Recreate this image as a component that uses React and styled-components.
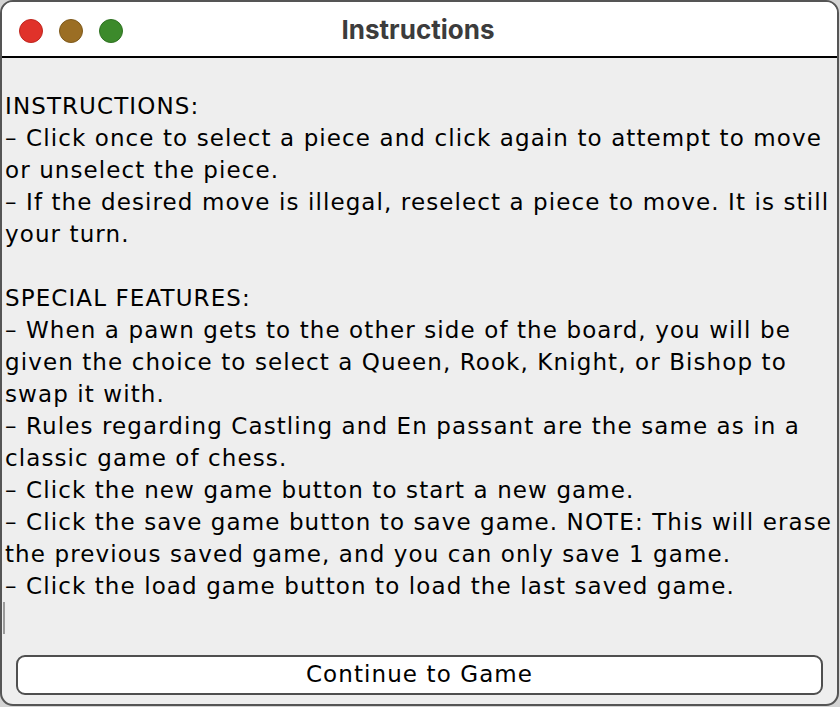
import React from "react";
import styled, { createGlobalStyle } from "styled-components";

const Global = createGlobalStyle`
  html, body { margin: 0; padding: 0; background: #d4d4d4; }
  body { width: 840px; height: 707px; overflow: hidden; }
`;

const Window = styled.div`
  box-sizing: border-box;
  width: 839px;
  height: 706px;
  border: 2px solid #555555;
  border-radius: 13px;
  overflow: hidden;
  background: #eeeeee;
  display: flex;
  flex-direction: column;
`;

const TitleBar = styled.div`
  position: relative;
  height: 54px;
  flex: none;
  background: #ffffff;
  border-bottom: 2px solid #000000;
  display: flex;
  align-items: center;
  justify-content: center;
`;

const Lights = styled.div`
  position: absolute;
  left: 17px;
  top: 17px;
  display: flex;
  gap: 16px;
`;

const Light = styled.span`
  box-sizing: border-box;
  width: 24px;
  height: 24px;
  border-radius: 50%;
  background: ${(p) => p.$fill};
  border: 1px solid ${(p) => p.$edge};
`;

const Title = styled.div`
  font-family: Inter, "Liberation Sans", sans-serif;
  font-weight: 700;
  font-size: 26px;
  color: #3c3c3c;
  margin-right: 3px;
`;

const TextArea = styled.div`
  position: relative;
  flex: 1;
  padding: 0 0 0 3px;
  font-family: "DejaVu Sans", "Liberation Sans", sans-serif;
  font-size: 23px;
  letter-spacing: 1.1px;
  line-height: 32px;
  color: #000000;
  white-space: pre;
  overflow: hidden;
`;

const Caret = styled.span`
  display: inline-block;
  width: 2px;
  height: 32px;
  margin-left: -2px;
  vertical-align: top;
  background: #9a9a9a;
`;

const Footer = styled.div`
  flex: none;
  padding: 0 14px 9px 14px;
`;

const Button = styled.button`
  box-sizing: border-box;
  width: 100%;
  height: 40px;
  border: 2px solid #4f4f4f;
  border-radius: 9px;
  background: #ffffff;
  font-family: "DejaVu Sans", "Liberation Sans", sans-serif;
  font-size: 23px;
  letter-spacing: 1.1px;
  color: #000000;
  padding: 0 0 2px 0;
  cursor: pointer;
`;

const lines = [
  "",
  "INSTRUCTIONS:",
  "– Click once to select a piece and click again to attempt to move",
  "or unselect the piece.",
  "– If the desired move is illegal, reselect a piece to move. It is still",
  "your turn.",
  "",
  "SPECIAL FEATURES:",
  "– When a pawn gets to the other side of the board, you will be",
  "given the choice to select a Queen, Rook, Knight, or Bishop to",
  "swap it with.",
  "– Rules regarding Castling and En passant are the same as in a",
  "classic game of chess.",
  "– Click the new game button to start a new game.",
  "– Click the save game button to save game. NOTE: This will erase",
  "the previous saved game, and you can only save 1 game.",
  "– Click the load game button to load the last saved game.",
];

export default function App() {
  return (
    <>
      <Global />
      <Window>
        <TitleBar>
          <Lights>
            <Light $fill="#e0322a" $edge="#c0261f" />
            <Light $fill="#9b6e24" $edge="#7f5a1c" />
            <Light $fill="#3c8a2b" $edge="#2f7222" />
          </Lights>
          <Title>Instructions</Title>
        </TitleBar>
        <TextArea>
          {lines.join("\n") + "\n"}
          <Caret />
        </TextArea>
        <Footer>
          <Button>Continue to Game</Button>
        </Footer>
      </Window>
    </>
  );
}
